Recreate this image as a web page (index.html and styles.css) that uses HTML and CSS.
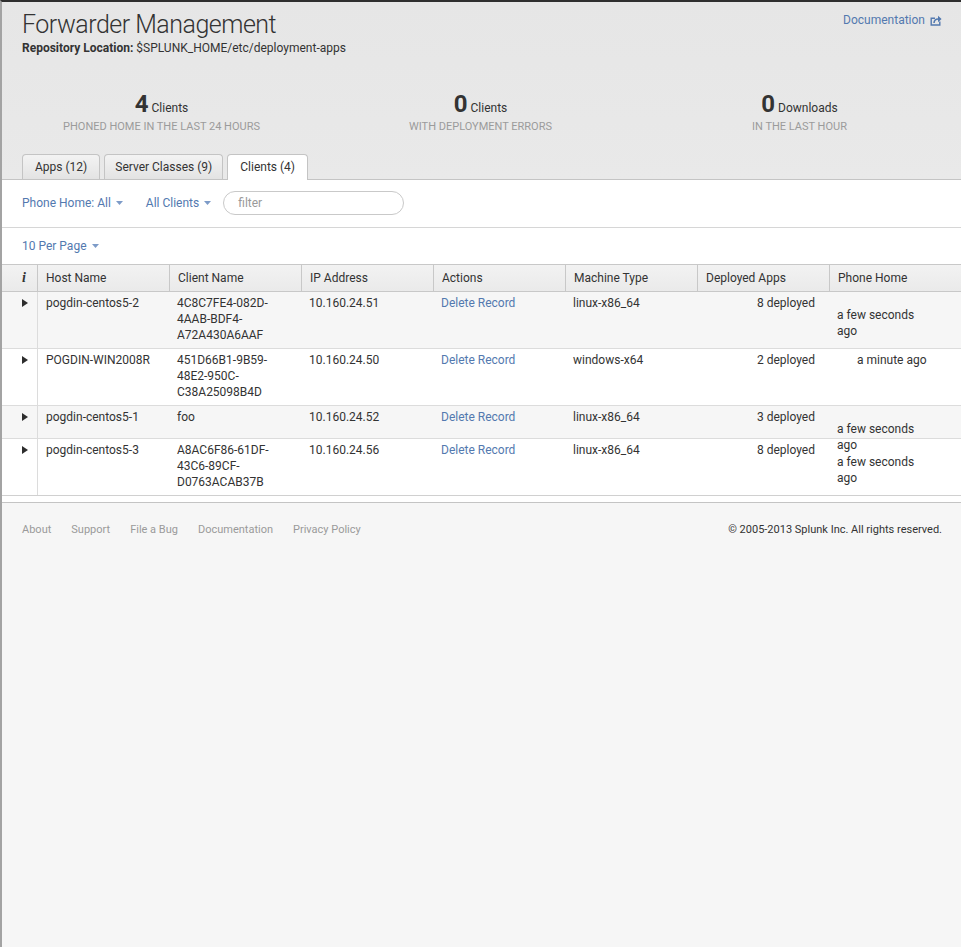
FILE: index.html
```html
<!DOCTYPE html>
<html>
<head>
<meta charset="utf-8">
<link rel="stylesheet" href="styles.css">
</head>
<body>
<div class="frame">
  <header class="page-head">
    <div class="title-row">
      <div>
        <h1 class="title">Forwarder Management</h1>
        <div class="repo"><b>Repository Location:</b> $SPLUNK_HOME/etc/deployment-apps</div>
      </div>
      <a class="doc-link">Documentation
        <svg class="ext" width="12" height="11" viewBox="0 0 12 11"><path d="M5 3.2H1.2V10H9.8V6.5" fill="none" stroke="#5379af" stroke-width="1.4"/><path d="M4 8C4.2 5.4 5.6 4 8.2 4" fill="none" stroke="#5379af" stroke-width="1.6"/><path d="M8 0.8L11.6 4L8 7.2Z" fill="#5379af"/></svg>
      </a>
    </div>
    <div class="stats">
      <div class="stat"><div class="stat-main"><span class="num">4</span> Clients</div><div class="stat-sub">Phoned home in the last 24 hours</div></div>
      <div class="stat"><div class="stat-main"><span class="num">0</span> Clients</div><div class="stat-sub">With deployment errors</div></div>
      <div class="stat"><div class="stat-main"><span class="num">0</span> Downloads</div><div class="stat-sub">In the last hour</div></div>
    </div>
    <nav class="tabs">
      <a class="tab">Apps (12)</a>
      <a class="tab">Server Classes (9)</a>
      <a class="tab active">Clients (4)</a>
    </nav>
  </header>

  <section class="content">
    <div class="filters">
      <a class="drop">Phone Home: All <svg class="caret" width="7" height="4" viewBox="0 0 7 4"><path d="M0 0H7L3.5 4Z"/></svg></a>
      <a class="drop">All Clients <svg class="caret" width="7" height="4" viewBox="0 0 7 4"><path d="M0 0H7L3.5 4Z"/></svg></a>
      <div class="search">filter</div>
    </div>
    <div class="paging">
      <a class="drop">10 Per Page <svg class="caret" width="7" height="4" viewBox="0 0 7 4"><path d="M0 0H7L3.5 4Z"/></svg></a>
    </div>

    <div class="table">
      <div class="row head">
        <div class="cell icon-col"><span class="info">i</span></div>
        <div class="cell">Host Name</div>
        <div class="cell">Client Name</div>
        <div class="cell">IP Address</div>
        <div class="cell">Actions</div>
        <div class="cell">Machine Type</div>
        <div class="cell">Deployed Apps</div>
        <div class="cell">Phone Home</div>
      </div>

      <div class="row odd">
        <div class="cell icon-col"><span class="tri"></span></div>
        <div class="cell">pogdin-centos5-2</div>
        <div class="cell wrap">4C8C7FE4-082D-<br>4AAB-BDF4-<br>A72A430A6AAF</div>
        <div class="cell">10.160.24.51</div>
        <div class="cell"><a class="link">Delete Record</a></div>
        <div class="cell">linux-x86_64</div>
        <div class="cell num-col">8 deployed</div>
        <div class="cell"><div class="ph down">a few seconds<br>ago</div></div>
      </div>

      <div class="row">
        <div class="cell icon-col"><span class="tri"></span></div>
        <div class="cell">POGDIN-WIN2008R</div>
        <div class="cell wrap">451D66B1-9B59-<br>48E2-950C-<br>C38A25098B4D</div>
        <div class="cell">10.160.24.50</div>
        <div class="cell"><a class="link">Delete Record</a></div>
        <div class="cell">windows-x64</div>
        <div class="cell num-col">2 deployed</div>
        <div class="cell"><div class="ph indent">a minute ago</div></div>
      </div>

      <div class="row odd">
        <div class="cell icon-col"><span class="tri"></span></div>
        <div class="cell">pogdin-centos5-1</div>
        <div class="cell">foo</div>
        <div class="cell">10.160.24.52</div>
        <div class="cell"><a class="link">Delete Record</a></div>
        <div class="cell">linux-x86_64</div>
        <div class="cell num-col">3 deployed</div>
        <div class="cell"><div class="ph down">a few seconds<br>ago</div></div>
      </div>

      <div class="row">
        <div class="cell icon-col"><span class="tri"></span></div>
        <div class="cell">pogdin-centos5-3</div>
        <div class="cell wrap">A8AC6F86-61DF-<br>43C6-89CF-<br>D0763ACAB37B</div>
        <div class="cell">10.160.24.56</div>
        <div class="cell"><a class="link">Delete Record</a></div>
        <div class="cell">linux-x86_64</div>
        <div class="cell num-col">8 deployed</div>
        <div class="cell"><div class="ph down">a few seconds<br>ago</div></div>
      </div>
    </div>
  </section>

  <footer class="footer">
    <div class="foot-links">
      <a>About</a><a>Support</a><a>File a Bug</a><a>Documentation</a><a>Privacy Policy</a>
    </div>
    <div class="copy">© 2005-2013 Splunk Inc. All rights reserved.</div>
  </footer>
</div>
</body>
</html>
```

FILE: styles.css
```css
html, body {
  margin: 0;
  padding: 0;
  height: 100%;
}
body {
  background: #f6f6f6;
  font-family: Roboto, "Liberation Sans", sans-serif;
  font-size: 12px;
  color: #333;
}
.frame {
  min-height: 100%;
  box-sizing: border-box;
  border-top: 2px solid #2e2e2e;
  border-left: 2px solid #a3a3a3;
  background: #f6f6f6;
}
a { color: #5379af; text-decoration: none; }

.page-head {
  background: linear-gradient(#e6e6e6, #e9e9e9);
}
.title-row {
  display: flex;
  justify-content: space-between;
  align-items: flex-start;
  padding: 9px 19px 0 20px;
}
.title {
  margin: 0;
  font-size: 25px;
  font-weight: 300;
  letter-spacing: -0.5px;
  line-height: 28px;
  color: #333;
}
.repo {
  line-height: 16px;
  font-size: 12px;
  margin-top: 1px;
}
.repo b { font-weight: 700; }
.doc-link {
  display: flex;
  align-items: center;
  gap: 5px;
  margin-top: 1px;
  line-height: 16px;
  font-size: 12px;
}
.ext { display: block; }

.stats {
  display: flex;
  margin-top: 36px;
  margin-right: 2px;
}
.stat {
  flex: 1;
  text-align: center;
}
.stat-main {
  line-height: 24px;
  font-size: 12px;
}
.num {
  font-size: 24px;
  font-weight: 700;
  color: #333;
}
.stat-sub {
  text-transform: uppercase;
  color: #9b9b9b;
  font-size: 11px;
  line-height: 14px;
}

.tabs {
  display: flex;
  gap: 4px;
  padding: 20px 20px 0;
  border-bottom: 1px solid #c4c4c4;
}
.tab {
  color: #333;
  padding: 0 12px;
  height: 24px;
  line-height: 24px;
  border: 1px solid #c4c4c4;
  border-bottom: none;
  border-radius: 4px 4px 0 0;
  background: linear-gradient(#f3f3f3, #e3e3e3);
}
.tab:nth-child(2) { padding: 0 10px; }
.tab.active {
  background: #fff;
  margin-bottom: -1px;
  height: 25px;
}

.content {
  background: #fff;
  padding-bottom: 6px;
  border-bottom: 1px solid #c4c4c4;
}
.filters {
  display: flex;
  align-items: center;
  padding: 11px 20px 12px;
  height: 24px;
  border-bottom: 1px solid #d6d6d6;
}
.drop {
  display: inline-flex;
  align-items: center;
  gap: 4px;
  line-height: 16px;
  margin-right: 23px;
}
.drop .caret { fill: #7d9bc8; margin-left: 1px; }
.filters .drop:nth-child(2) { margin-right: 12px; }
.search {
  width: 165px;
  height: 22px;
  line-height: 22px;
  border: 1px solid #c9c9c9;
  border-radius: 12px;
  padding-left: 14px;
  color: #9a9a9a;
}
.paging {
  padding: 10px 20px 10px;
  line-height: 16px;
}

.table {
  border-top: 1px solid #c8c8c8;
  border-bottom: 1px solid #d0d0d0;
}
.row {
  display: grid;
  grid-template-columns: 35px repeat(7, 1fr);
  border-bottom: 1px solid #dcdcdc;
  min-height: 32px;
  line-height: 16px;
}
.row:last-child { border-bottom: none; }
.row.odd { background: #f6f6f6; }
.row.head {
  background: linear-gradient(#f2f2f2, #eaeaea);
  border-bottom: 1px solid #c8c8c8;
  min-height: 0;
}
.cell {
  padding: 3px 8px 5px;
  min-width: 0;
}
.row.head .cell {
  padding: 5px 8px 5px;
  border-left: 1px solid #c8c8c8;
}
.row.head .cell.icon-col { border-left: none; }
.row .cell:nth-child(2) { border-left: 1px solid #dcdcdc; }
.row.head .cell:nth-child(2) { border-left: 1px solid #c8c8c8; }
.icon-col { padding-left: 20px !important; padding-right: 0 !important; }
.info {
  font-family: "Liberation Serif", "DejaVu Serif", serif;
  font-style: italic;
  font-weight: 700;
  font-size: 14px;
}
.tri {
  display: inline-block;
  width: 0;
  height: 0;
  margin-top: 4px;
  border-left: 6px solid #2d2d2d;
  border-top: 4.5px solid transparent;
  border-bottom: 4.5px solid transparent;
}
.num-col {
  text-align: right;
  padding-right: 14px;
}
.ph {
  box-sizing: border-box;
  height: 16px;
  overflow: visible;
}
.ph.down { padding-top: 12px; }
.ph.indent { padding-left: 20px; }
.link { color: #5379af; }

.footer {
  display: flex;
  justify-content: space-between;
  padding: 20px 19px 0 20px;
  font-size: 11px;
  line-height: 14px;
}
.foot-links {
  display: flex;
  gap: 20px;
}
.foot-links a { color: #9a9a9a; }
.copy { color: #333; }
```
